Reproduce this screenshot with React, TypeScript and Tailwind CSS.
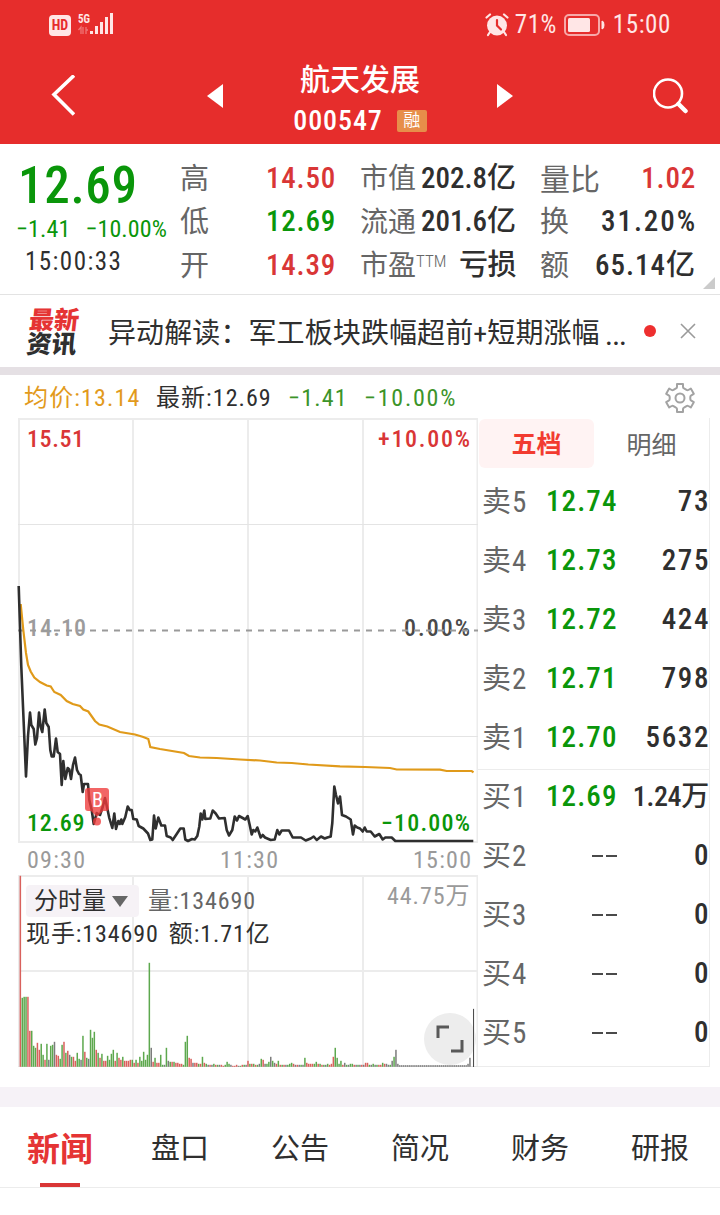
import type { ReactNode } from 'react';

type Tone = 'up' | 'down' | 'plain';

const toneClass: Record<Tone, string> = {
  up: 'text-[#d93636]',
  down: 'text-[#0a960a]',
  plain: 'text-[#2f2f2f]',
};

type Stat = { label: ReactNode; value: ReactNode; tone: Tone; labelClass: string; valueClass: string };

const statColumns: Stat[][] = [
  [
    { label: '高', value: '14.50', tone: 'up', labelClass: 'text-[29px]', valueClass: '-mr-px tracking-[0.8px]' },
    { label: '低', value: '12.69', tone: 'down', labelClass: 'text-[29px]', valueClass: '-mr-px tracking-[0.8px]' },
    { label: '开', value: '14.39', tone: 'up', labelClass: 'text-[29px]', valueClass: '-mr-px tracking-[0.8px]' },
  ],
  [
    { label: '市值', value: '202.8亿', tone: 'plain', labelClass: 'text-[28px]', valueClass: '-mr-px tracking-normal' },
    { label: '流通', value: '201.6亿', tone: 'plain', labelClass: 'text-[28px]', valueClass: '-mr-px tracking-normal' },
    {
      label: (
        <>
          市盈<span className="relative -top-[8px] text-[17px] font-light">TTM</span>
        </>
      ),
      value: '亏损',
      tone: 'plain',
      labelClass: 'text-[28px]',
      valueClass: '-mr-px tracking-[-0.5px]',
    },
  ],
  [
    { label: '量比', value: '1.02', tone: 'up', labelClass: 'text-[30px]', valueClass: '-mr-px tracking-[0.8px]' },
    { label: '换', value: '31.20%', tone: 'plain', labelClass: 'text-[29px]', valueClass: '-mr-[2px] tracking-[1.9px]' },
    { label: '额', value: '65.14亿', tone: 'plain', labelClass: 'text-[29px]', valueClass: '-mr-px tracking-[1px]' },
  ],
];

const orders = [
  { side: '卖5', price: '12.74', volume: '73' },
  { side: '卖4', price: '12.73', volume: '275' },
  { side: '卖3', price: '12.72', volume: '424' },
  { side: '卖2', price: '12.71', volume: '798' },
  { side: '卖1', price: '12.70', volume: '5632' },
  { side: '买1', price: '12.69', volume: '1.24万' },
  { side: '买2', price: null, volume: '0' },
  { side: '买3', price: null, volume: '0' },
  { side: '买4', price: null, volume: '0' },
  { side: '买5', price: null, volume: '0' },
];

const tabs = ['新闻', '盘口', '公告', '简况', '财务', '研报'];

const pricePoints =
  '18.7,586 21.3,666.7 26,776.5 28,736 30,712.5 31.3,725 33.7,729 35.3,744.5 37,738 39,712.5 40.7,727 42.3,732 44.7,709.5 46.3,723 48.7,727 50.3,750 51.7,756.5 53.7,756.5 56,738.5 57.7,752 60,754 61.7,785 63.3,761 65.3,779 67.7,768 69.3,769.5 71,779 73,765 75,757.5 77,770 79,774 80.7,775 82.7,792 84,784 88,784 89.3,800 91.7,810 93.7,824 96.7,813 100,815 102.7,807 105,798 107,807 109.3,818 112.3,828 114.3,813.5 116,829 118.3,821 119.7,824 121.3,819.5 122.3,824 125.3,817 127.7,806.5 129.7,810 131.7,810 133.3,819 136.7,819.5 138.7,826 143.3,828.5 148,833.5 150.3,840 152.3,839.5 154,815.5 155.7,828.5 158.3,817.5 161.3,825.5 165,825.5 166.7,836 170.7,837.5 172.7,840 176.7,834 180.3,828.5 183.7,828.5 185.3,839.5 188,841 192,839 194.7,839.5 197.3,836 199.3,826.5 200.7,813.5 202.3,819.5 204.3,810.5 205.3,819 210.3,818.5 212.7,810.5 215.7,813.5 219,818.5 224.7,818 226.7,830 229,835.5 232.3,830 234.7,816.5 237,820.5 239,816 242.7,818 245.3,819.5 247.7,816 249.7,825 251.7,834.5 253.3,830 255.3,831.5 257.3,827.5 260.7,837.5 262.7,835 265,837.5 270.7,840 274.7,839.5 277.3,830 279.3,834.5 281.7,830.5 289,830.5 292.7,837.5 301,837.5 305.7,840.5 310.7,838.5 313.7,836.5 316.7,840 321,836.5 324.7,838.5 327.3,837.5 330.7,836.5 332.3,823 334.3,786.5 336,795 338,803.5 340,796.5 342,815 346,816.5 350.7,819.5 353,834.5 354.7,825.5 357.3,827.5 360,828.5 362.7,831.5 364.7,827.5 366.7,831.5 370.7,831.5 374.7,836.5 379.3,834 382.7,839.5 385.3,837.5 391.7,837.5 395.3,841 473.3,841';

const averagePoints =
  '20.7,604 23.3,630 26,653 28,665 30.7,671.5 34.3,677.5 40,682 46.7,685.5 50.7,686.5 54.3,692 60.7,695 66.7,701 72.7,704 80,706 83.3,709.5 88.3,711.5 95,721 99.3,724.5 107.3,726.5 120,732 135,734.5 143.3,737 148.3,739 150.3,747 160,749 184,753 189,756 200,757.5 216.7,758 240,759.5 260,760.5 276.7,762.5 291.7,763 308.3,764.5 340,766.3 365,767 390,768 396.7,769.5 440,769.7 446.7,771 471.7,771 473.5,772.3';

// One bar per minute: r = up, g = down, k = flat.
const volumes = [
  'r191 g69 g70 g70 r70 r36 g36 g21 g19 r24 r17 g23 g12 r7 g23 k7 g21 g22 k25 r12',
  'r11 g8 g22 r25 g14 r16 k12 g10 r10 r6 g14 g8 k7 g31 r15 g9 k8 g37 g29 g35',
  'r17 g14 r9 g13 r6 r6 g11 g7 g13 g17 r6 g14 r9 r7 g10 r6 r6 r6 r7 g7',
  'r4 g7 r4 g10 g6 g15 g7 g12 g104 k19 r5 g9 r4 r4 g12 g2 k2 g19 k6 g5',
  'r5 g5 r4 r4 r3 r3 g2 g25 g31 r9 r8 k4 r4 r4 g3 r3 g10 r4 g3 k2',
  'r2 k2 g3 r2 g2 k2 r2 r1 g2 g5 g3 k2 r1 r1 r2 k1 g1 r2 g2 k2',
  'r6 g3 r3 g3 r2 g2 k3 g8 r7 k3 g3 g5 k10 g6 k4 r3 g6 r2 g2 r2',
  'k2 g2 g3 g4 r3 k2 r2 k2 g2 k2 g9 r4 r3 r3 r3 g3 g5 r3 g3 r2',
  'g2 k2 g3 r2 r3 r10 g19 g9 g3 g6 r2 k4 g2 k2 g3 g3 r2 k2 g2 k2',
  'r2 k2 r4 r4 g2 k2 g3 k2 g2 r2 r2 g4 r3 k3 k2 g2 k6 g10 k17 k3',
]
  .join(' ')
  .split(' ')
  .concat(Array(36).fill('k1.6'), ['k3', 'k9', 'k0', 'k58']);

const volumeFill: Record<string, string> = {
  r: '#d9605c',
  g: '#5da84e',
  k: '#7c7c7c',
};

const StatusBar = () => (
  <div className="flex h-[50px] items-center pr-[49px] pl-[49px] text-[#ffe6e6]">
    <span className="flex h-[21px] w-[22px] items-center justify-center rounded bg-[#ffe6e6] text-[14px] font-bold text-[#e62d2c]">
      HD
    </span>
    <svg className="ml-[7px] h-7 w-9" viewBox="0 0 36 28" fill="currentColor">
      <text x="0" y="11.500" fontSize="13" fontWeight="700" textLength="12" lengthAdjust="spacingAndGlyphs">
        5G
      </text>
      <path d="M3 23v-7l-2.500 3M5 16v7M8 16v7M8 19h2" fill="none" stroke="#f07575" strokeWidth="1.300" />
      <path d="M12 20h3v3h-3zM17 15h3v8h-3zM22 11h3v12h-3zM27 6h3v17h-3zM32 2h3v21h-3z" />
    </svg>
    <svg className="ml-auto h-6 w-6" viewBox="0 0 24 24" fill="none" stroke="currentColor">
      <circle cx="12" cy="12.500" r="10" fill="currentColor" stroke="none" />
      <path d="M1.500 4.500 5 1.500M22.500 4.500 19 1.500" strokeWidth="2.200" strokeLinecap="round" />
      <path d="M5 19l-2 3M19 19l2 3" strokeWidth="2.200" strokeLinecap="round" />
      <path d="M12 7v5.500l4 4" stroke="#e62d2c" strokeWidth="2.200" strokeLinecap="round" />
    </svg>
    <span className="ml-[6px] w-[44px] text-[25px] tracking-[0.5px] whitespace-nowrap">71%</span>
    <svg className="ml-[5px] h-6 w-[42px]" viewBox="0 0 42 24">
      <rect x="1" y="2" width="34" height="20" rx="4" fill="none" stroke="#f7a9a9" strokeWidth="2" />
      <rect x="4" y="5" width="22" height="14" rx="1.500" fill="currentColor" />
      <path d="M38 8q2 0 2 4t-2 4z" fill="currentColor" stroke="currentColor" />
    </svg>
    <span className="ml-[7px] text-[25px] tracking-[0.6px]">15:00</span>
  </div>
);

const Header = () => (
  <header className="h-[144px] bg-[#e62d2c] text-white">
    <StatusBar />
    <div className="flex h-[92px] items-center pl-[51px]">
      <svg className="h-[42px] w-6" viewBox="0 0 24 42" fill="none" stroke="currentColor" strokeWidth="3.600">
        <path d="M23 0.500 3 19.500l20 20" />
      </svg>
      <svg className="ml-[132px] h-6 w-4" viewBox="0 0 16 24" fill="currentColor">
        <path d="M16 0v24L0 12z" />
      </svg>
      <div className="flex h-full w-[274px] flex-col items-center pt-[11px]">
        <h1 className="h-[39px] text-[30px] leading-[38px] font-medium">航天发展</h1>
        <div className="flex h-[41px] items-center">
          <span className="mr-[14px] text-[28px] font-medium tracking-[0.9px]">000547</span>
          <span className="flex h-[22px] w-[30px] items-center justify-center rounded-[2px] bg-[#e78e4a] text-[17px]">
            融
          </span>
        </div>
      </div>
      <svg className="h-6 w-4" viewBox="0 0 16 24" fill="currentColor">
        <path d="M0 0v24l16-12z" />
      </svg>
      <svg className="ml-[140px] h-9 w-9" viewBox="0 0 36 36" fill="none" stroke="currentColor">
        <circle cx="15" cy="15.500" r="14" strokeWidth="2.600" />
        <path d="m25.500 26 7 7" strokeWidth="4.500" strokeLinecap="round" />
      </svg>
    </div>
  </header>
);

const QuotePanel = () => (
  <section className="relative flex h-[151px] border-b border-[#e3e3e3] pt-3 pl-4">
    <div className="w-[164px] whitespace-nowrap">
      <p className="ml-[2px] h-[58px] text-[51px] leading-[59px] font-medium tracking-[0.700px] text-[#0a960a]">12.69</p>
      <p className="h-[29px] text-[24px] leading-[31px] tracking-[0.100px] text-[#0a960a]">
        <span className="mr-[15px]">−1.41</span>−10.00%
      </p>
      <p className="ml-[9px] text-[25px] leading-[38px] tracking-[1.450px] text-[#2f2f2f]">15:00:33</p>
    </div>
    <div className="grid grid-cols-3 gap-x-[25px]">
      {statColumns.map((column, index) => (
        <div key={index} className="w-[155px]">
          {column.map((stat, row) => (
            <div key={row} className="flex h-[43.5px] items-center justify-between whitespace-nowrap">
              <span className={`pt-[3px] text-[#666] ${stat.labelClass}`}>{stat.label}</span>
              <span className={`pt-px text-[29px] font-medium ${stat.valueClass} ${toneClass[stat.tone]}`}>
                {stat.value}
              </span>
            </div>
          ))}
        </div>
      ))}
    </div>
    <svg className="absolute right-[5px] bottom-[5px] h-3 w-3" viewBox="0 0 12 12">
      <path d="M12 0v12H0z" fill="#cbcbcb" />
    </svg>
  </section>
);

const NewsRow = () => (
  <section className="flex h-[72px] items-center pr-6 pl-7">
    <div className="w-[52px] -skew-x-6 pt-[3px] text-[25px] leading-[24px] font-black text-[#2f2f2f]">
      <p className="text-[#e53434]">最新</p>
      <p>资讯</p>
    </div>
    <p className="ml-[28px] flex w-[528px] items-center pt-[6px] text-[28px] tracking-[0.100px] whitespace-nowrap text-[#2f2f2f]">
      异动解读：军工板块跌幅超前+短期涨幅
      <span className="ml-1 pb-[7px] text-[42px] leading-[28px] font-light">…</span>
    </p>
    <span className="ml-2 h-3 w-3 rounded-full bg-[#ee2f2f]" />
    <svg className="ml-auto h-4 w-4" viewBox="0 0 16 16" stroke="#9a9a9a" strokeWidth="1.600">
      <path d="m1 1 14 14M15 1 1 15" />
    </svg>
  </section>
);

const GearIcon = () => (
  <svg className="h-8 w-8" viewBox="0 0 32 32" fill="none" stroke="#a3a3a3" strokeWidth="2" strokeLinejoin="round">
    <path d="M13 2h6v3q0 1 1 1.400l2.500 1.500q1 .6 1.800.1l2.500-1.400 3 5.200-2.500 1.500q-1 .6-1 1.700v2q0 1.100 1 1.700l2.500 1.500-3 5.200-2.500-1.400q-.8-.5-1.800.1L20 25.600q-1 .4-1 1.400v3h-6v-3q0-1-1-1.400l-2.500-1.500q-1-.6-1.800-.1l-2.500 1.400-3-5.200 2.500-1.500q1-.6 1-1.700v-2q0-1.100-1-1.700l-2.500-1.500 3-5.200L7.700 8q.8.5 1.800-.1L12 6.400q1-.4 1-1.400z" />
    <circle cx="16" cy="16" r="4.500" />
  </svg>
);

const Legend = () => (
  <div className="flex h-[43px] items-center pt-[2px] pr-6 pl-6 text-[24px] whitespace-nowrap">
    <span className="w-[132px] tracking-[1.150px] text-[#e29a1c]">均价:13.14</span>
    <span className="w-[132px] tracking-[1.050px] text-[#2f2f2f]">最新:12.69</span>
    <span className="w-[76px] tracking-[1.200px] text-[#3c9429]">−1.41</span>
    <span className="tracking-[1.750px] text-[#3c9429]">−10.00%</span>
    <span className="ml-auto">
      <GearIcon />
    </span>
  </div>
);

const Chart = () => (
  <div className="relative h-[662px] w-[478px]">
    <svg className="block h-full w-full" viewBox="0 418 478 662">
      <g stroke="#ececec" strokeWidth="2" fill="none">
        <path d="M19 418v425M133 418v425M248 418v425M363 418v425M477.500 418v425" />
        <path d="M19 875v192M133 875v192M248 875v192M363 875v192M477.500 875v192" />
        <path d="M18 419h460M18 842h460M18 876h460M18 971h460" />
        <path d="M18 524.500h460M18 736.500h460M18 1066.500h460" strokeWidth="1" stroke="#e4e4e4" />
      </g>
      <g fontSize="24" fontWeight="500">
        <text x="27" y="447" fill="#d93636" textLength="57">15.51</text>
        <text x="378" y="447" fill="#d93636" textLength="92">+10.00%</text>
        <text x="27" y="636" fill="#9c9c9c" textLength="59">14.10</text>
        <text x="404" y="636" fill="#4a4a4a" textLength="66">0.00%</text>
        <text x="27" y="831" fill="#0a960a" textLength="57.500">12.69</text>
        <text x="381" y="831" fill="#0a960a" textLength="89">−10.00%</text>
      </g>
      <g fontSize="24" fill="#9a9a9a">
        <text x="27" y="868" textLength="58">09:30</text>
        <text x="220" y="868" textLength="58">11:30</text>
        <text x="413" y="868" textLength="58">15:00</text>
        <text x="387" y="904" textLength="82.500">44.75万</text>
      </g>
      <path d="M18 630.500h460" stroke="#9a9a9a" strokeWidth="2" strokeDasharray="6 6" />
      <polyline points={averagePoints} fill="none" stroke="#e09a1a" strokeWidth="2.200" />
      <polyline points={pricePoints} fill="none" stroke="#2f2f2f" strokeWidth="2.600" strokeLinejoin="round" />
      <g fill="#ee3a3a" fillOpacity="0.780">
        <rect x="85" y="788" width="24" height="23" rx="3" />
        <path d="M91 811h12l-6 6z" />
        <circle cx="97" cy="821.500" r="4" />
      </g>
      <text x="97.500" y="807" fill="#fff" fontSize="20" textAnchor="middle">
        B
      </text>
      {volumes.map((bar, index) => {
        const height = Number(bar.slice(1));
        return (
          <rect
            key={index}
            x={19.6 + index * 1.897}
            y={1066.8 - height}
            width={index === 239 ? 1.1 : 1.5}
            height={height}
            fill={volumeFill[bar[0]]}
          />
        );
      })}
      <circle cx="450" cy="1039" r="26" fill="#ededed" />
      <path d="M438 1038v-11h11M462 1040v11h-11" fill="none" stroke="#595959" strokeWidth="3" />
      <path d="M473.500 1009v58" stroke="#4d4d4d" strokeWidth="1" />
    </svg>
    <div className="absolute top-[465px] left-[26px] whitespace-nowrap">
      <div className="flex items-center">
        <button type="button" className="flex h-8 w-[113px] items-center rounded bg-[#f6f2f6] pl-[8px] text-[24px] text-[#2f2f2f]">
          分时量
          <svg className="ml-[6px] h-[11px] w-4" viewBox="0 0 16 11">
            <path d="M0 0h16L8 11z" fill="#666" />
          </svg>
        </button>
        <span className="ml-[9px] text-[24px] tracking-[0.900px] text-[#666]">量:134690</span>
      </div>
      <p className="text-[24px] leading-[30px] tracking-[0.900px] text-[#2f2f2f]">
        <span className="mr-[10px]">现手:134690</span>额:1.71亿
      </p>
    </div>
  </div>
);

const rowClass = (index: number) => {
  // The line between asks and bids sits a little below the row's own edge.
  if (index === 4) return 'h-[62px] border-b border-[#ececec] pb-[2px]';
  if (index === 5) return 'h-[56px] pb-[3px]';
  return 'h-[59px]';
};

const OrderBook = () => (
  <div className="h-[649px] w-[232px] border-r border-b border-[#ececec]">
    <div className="mb-[3px] flex h-[51px] items-center pl-[1px] text-[25px]">
      <span className="flex h-[49px] w-[115px] items-center justify-center rounded-md bg-[#fff3f3] pt-[3px] font-bold text-[#f23b30]">
        五档
      </span>
      <span className="flex-1 pt-[4px] text-center text-[#666]">明细</span>
    </div>
    {orders.map((order, index) => (
      <div key={order.side} className={`flex items-center pl-[4px] text-[29px] whitespace-nowrap ${rowClass(index)}`}>
        <span className="w-[64px] pt-[2px] tracking-[1px] text-[#666]">{order.side}</span>
        {order.price ? (
          <span className="font-medium tracking-[1.100px] text-[#0a960a]">{order.price}</span>
        ) : (
          <span className="flex gap-[3px] pl-[46px]">
            <i className="h-[2px] w-[11px] bg-[#4a4a4a]" />
            <i className="h-[2px] w-[11px] bg-[#4a4a4a]" />
          </span>
        )}
        <span
          className={`ml-auto font-medium text-[#2f2f2f] ${index === 5 ? 'text-[28px] tracking-[-0.300px]' : '-mr-px tracking-[1.600px]'}`}
        >
          {order.volume}
        </span>
      </div>
    ))}
  </div>
);

const BottomTabs = () => (
  <nav className="grid h-[81px] grid-cols-6 border-b border-[#ececec]">
    {tabs.map((tab, index) => (
      <button
        key={tab}
        type="button"
        className={`flex flex-col items-center justify-end ${index === 0 ? 'text-[33px] font-bold text-[#e53434]' : 'text-[29px] text-[#2f2f2f]'}`}
      >
        <span className="flex h-[69px] items-center pt-[3px]">{tab}</span>
        <span className={`h-1 w-10 ${index === 0 ? 'bg-[#d93636]' : ''}`} />
      </button>
    ))}
  </nav>
);

export default function App() {
  return (
    <div className="h-[1215px] w-[720px] overflow-hidden bg-white [font-family:Roboto,'Noto_Sans_CJK_SC',sans-serif] [font-stretch:87%]">
      <Header />
      <QuotePanel />
      <NewsRow />
      <div className="h-2 bg-[#e5e0e4]" />
      <Legend />
      <div className="flex h-[669px]">
        <Chart />
        <OrderBook />
      </div>
      <div className="h-5 bg-[#f6f2f7]" />
      <BottomTabs />
    </div>
  );
}
